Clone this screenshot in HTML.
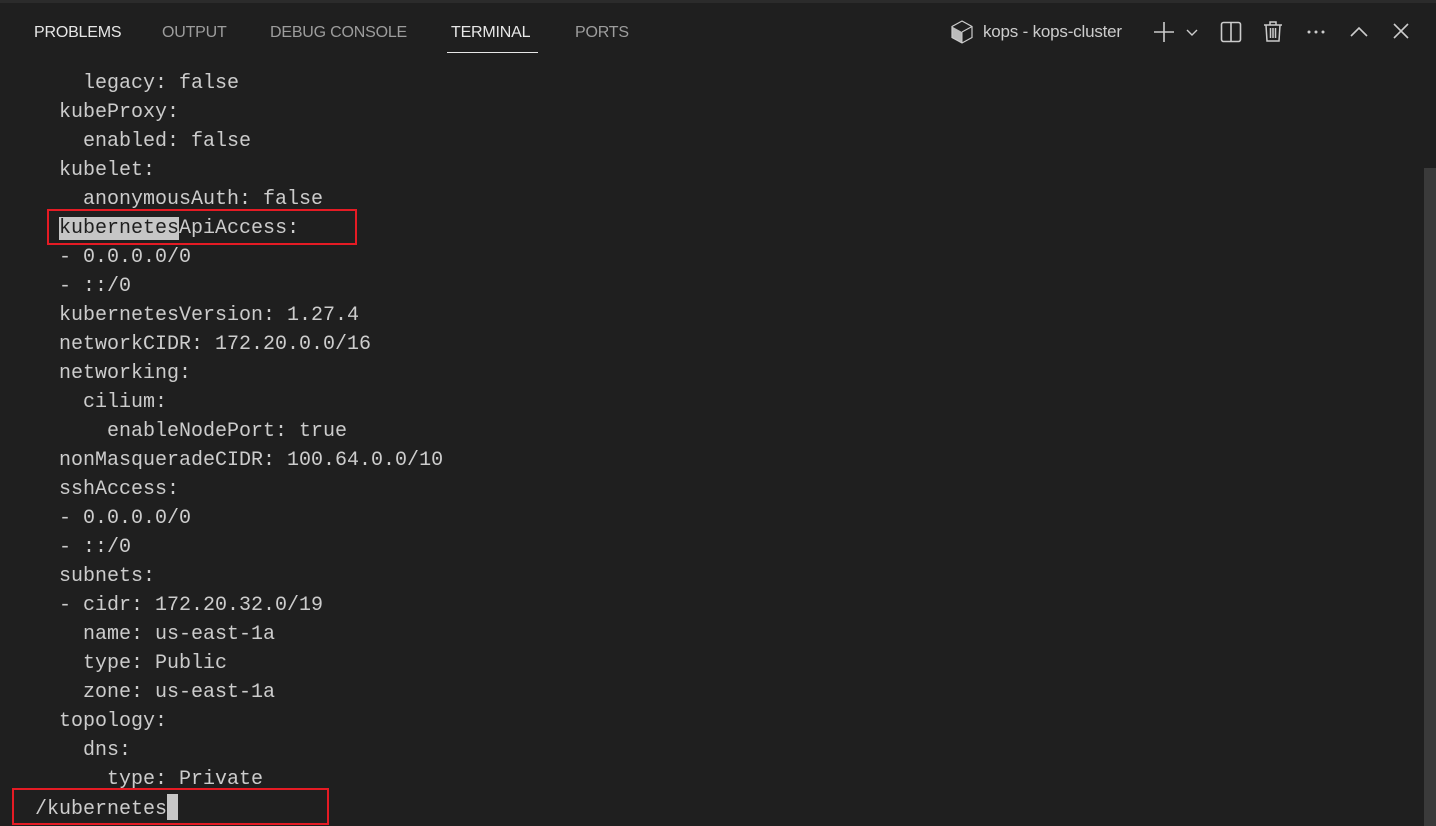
<!DOCTYPE html>
<html><head><meta charset="utf-8"><style>
html,body{margin:0;padding:0;width:1436px;height:826px;overflow:hidden;background:#1f1f1f;}
.top{position:absolute;left:0;top:0;width:1436px;height:3px;background:#2b2b2b;}
.tab{position:absolute;top:24px;font:16px "Liberation Sans",sans-serif;color:#9d9d9d;letter-spacing:-0.2px;}
.act{color:#e7e7e7;}
.ul{position:absolute;left:447px;top:52px;width:91px;height:1px;background:#e7e7e7;}
.term{position:absolute;left:35px;top:69px;font:20px/29px "Liberation Mono",monospace;color:#cccccc;white-space:pre;}
.hl{background:#c6c6c6;color:#1f1f1f;}
.box{position:absolute;border:2px solid #e51b24;}
.cur{display:inline-block;width:11px;height:26px;background:#c6c6c6;vertical-align:-6px;}
.sb{position:absolute;left:1424px;top:168px;width:12px;height:658px;background:#3a3a3a;}
svg{position:absolute;}
</style></head><body>
<div class="top"></div>
<div class="tab act" style="left:34px">PROBLEMS</div>
<div class="tab" style="left:162px">OUTPUT</div>
<div class="tab" style="left:270px">DEBUG CONSOLE</div>
<div class="tab act" style="left:451px">TERMINAL</div>
<div class="tab" style="left:575px">PORTS</div>
<div class="ul"></div>
<svg style="left:950px;top:19px" width="24" height="26" viewBox="0 0 24 26"><path d="M12 2L22 7.5V18.5L12 24L2 18.5V7.5Z" fill="none" stroke="#ccc" stroke-width="1.2"/><path d="M12 13L22 7.5M12 13V24" stroke="#ccc" stroke-width="1"/><path d="M12 13V24L2 18.5V7.5Z" fill="#ccc" opacity=".9"/></svg>
<div class="tab" style="left:983px;top:22px;color:#cccccc;font-size:17px">kops - kops-cluster</div>
<svg style="left:1152px;top:20px" width="50" height="24" viewBox="0 0 50 24"><path d="M12 2V22M2 12H22" stroke="#ccc" stroke-width="1.6"/><path d="M35 10L40 15L45 10" fill="none" stroke="#ccc" stroke-width="1.4"/></svg>
<svg style="left:1219px;top:20px" width="24" height="24" viewBox="0 0 24 24"><rect x="2.5" y="2.5" width="19" height="19" rx="2" fill="none" stroke="#ccc" stroke-width="1.6"/><path d="M12 3V21" stroke="#ccc" stroke-width="1.6"/></svg>
<svg style="left:1261px;top:19px" width="24" height="24" viewBox="0 0 24 24"><path d="M3 6H21M9 6V3H15V6M5 6L6 22H18L19 6M9.5 9V19M12 9V19M14.5 9V19" fill="none" stroke="#ccc" stroke-width="1.5"/></svg>
<svg style="left:1304px;top:20px" width="24" height="24" viewBox="0 0 24 24"><circle cx="5" cy="12" r="1.5" fill="#ccc"/><circle cx="12" cy="12" r="1.5" fill="#ccc"/><circle cx="19" cy="12" r="1.5" fill="#ccc"/></svg>
<svg style="left:1347px;top:20px" width="24" height="24" viewBox="0 0 24 24"><path d="M4 16L12 8L20 16" fill="none" stroke="#ccc" stroke-width="1.6"/></svg>
<svg style="left:1389px;top:19px" width="24" height="24" viewBox="0 0 24 24"><path d="M5 5L19 19M19 5L5 19" stroke="#ccc" stroke-width="1.6"/></svg>
<div class="term">    legacy: false
  kubeProxy:
    enabled: false
  kubelet:
    anonymousAuth: false
  <span class="hl">kubernetes</span>ApiAccess:
  - 0.0.0.0/0
  - ::/0
  kubernetesVersion: 1.27.4
  networkCIDR: 172.20.0.0/16
  networking:
    cilium:
      enableNodePort: true
  nonMasqueradeCIDR: 100.64.0.0/10
  sshAccess:
  - 0.0.0.0/0
  - ::/0
  subnets:
  - cidr: 172.20.32.0/19
    name: us-east-1a
    type: Public
    zone: us-east-1a
  topology:
    dns:
      type: Private
/kubernetes<span class="cur"></span></div>
<div class="box" style="left:47px;top:209px;width:306px;height:32px"></div>
<div class="box" style="left:12px;top:788px;width:313px;height:33px"></div>
<div class="sb"></div>
</body></html>
